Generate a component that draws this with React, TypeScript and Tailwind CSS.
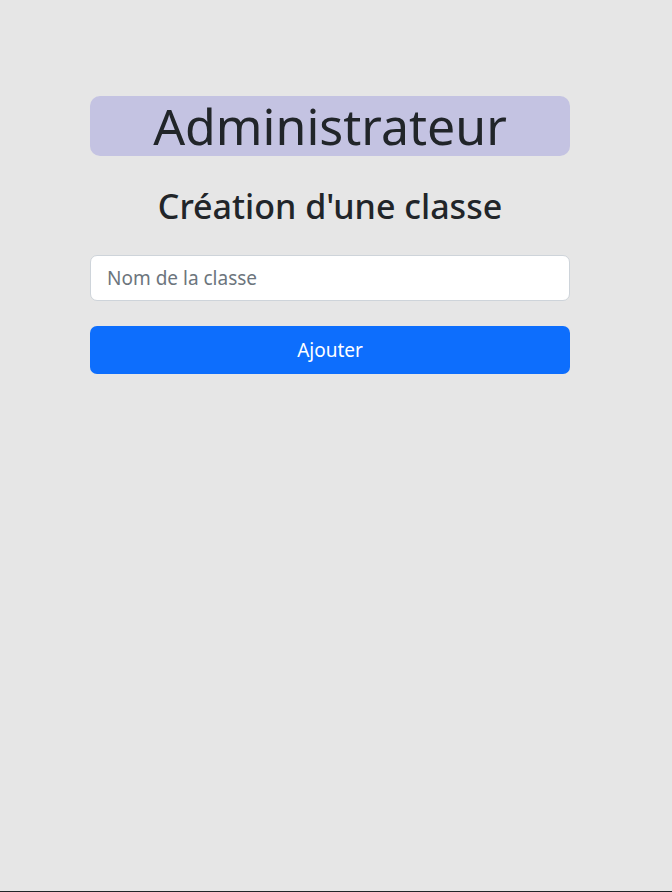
export default function App() {
  return (
    <div
      className="flex h-[892px] flex-col border-b border-[#212529] bg-[#e6e6e6] text-[#212529]"
      style={{ fontFamily: '"Noto Sans", "Open Sans", sans-serif' }}
    >
      <div className="ml-[90px] mt-[96px] flex w-[480px] flex-col">
        <div className="flex h-[60px] items-center justify-center rounded-[10px] bg-[#c4c3e2]">
          <h1 className="text-[50px] leading-none">Administrateur</h1>
        </div>
        <h2 className="mt-[30px] text-center text-[34px] font-medium leading-[40px]">
          Création d'une classe
        </h2>
        <input
          type="text"
          placeholder="Nom de la classe"
          className="mt-[29px] h-[46px] rounded-[7px] border border-[#ced4da] bg-white px-4 text-[19px] placeholder:text-[#6c757d] focus:outline-none"
        />
        <button className="mt-[25px] h-[48px] rounded-[7px] bg-[#0d6efd] text-[19px] text-white">
          Ajouter
        </button>
      </div>
    </div>
  );
}
